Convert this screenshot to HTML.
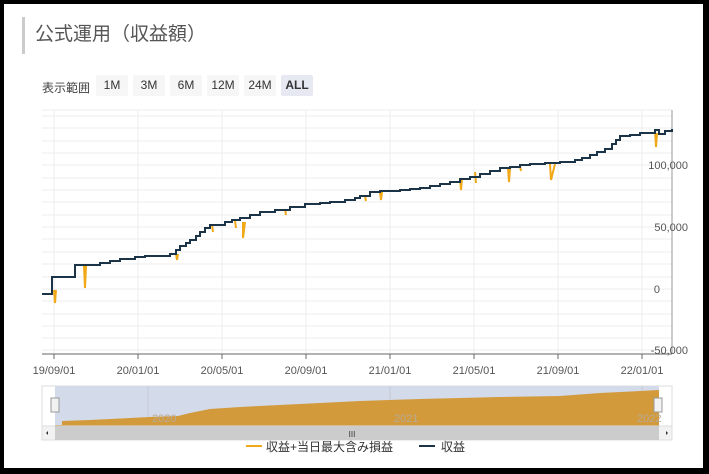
<!DOCTYPE html>
<html><head><meta charset="utf-8"><style>
body{margin:0;width:709px;height:474px;background:#000;overflow:hidden;font-family:"Liberation Sans","Noto Sans CJK JP",sans-serif}
.f{position:absolute;left:4px;top:4px;width:699px;height:464px;background:#fff}
.t{position:absolute;left:22px;top:17px;border-left:3px solid #ccc;padding-left:10px;height:37px;line-height:36px;font-size:19px;color:#555}
.r{position:absolute;top:75px;font-size:12px;color:#444}
.b{position:absolute;top:75px;height:21px;line-height:21px;background:#f6f6f6;font-size:12px;color:#333;text-align:center;border-radius:2px}
</style></head><body><div class="f"></div>
<div class="t">公式運用（収益額）</div>
<div class="r" style="left:42px;top:79px">表示範囲</div>
<div class="b" style="left:96px;width:32px">1M</div>
<div class="b" style="left:133px;width:32px">3M</div>
<div class="b" style="left:170px;width:32px">6M</div>
<div class="b" style="left:207px;width:32px">12M</div>
<div class="b" style="left:244px;width:32px">24M</div>
<div class="b" style="left:281px;width:32px;background:#e6e9f2;font-weight:bold">ALL</div>
<svg width="709" height="474" style="position:absolute;left:0;top:0" font-family="Liberation Sans" font-size="11" fill="#555">
<g stroke="#ececec">
<line x1="42" y1="110" x2="672" y2="110"/>
<path d="M42 116H672M42 128H672M42 141H672M42 153H672M42 165H672M42 178H672M42 190H672M42 202H672M42 215H672M42 227H672M42 239H672M42 252H672M42 264H672M42 277H672M42 289H672M42 301H672M42 314H672M42 326H672M42 338H672M42 350H672"/>
<path d="M54 110V354M138 110V354M222 110V354M306 110V354M390 110V354M474 110V354M558 110V354M642 110V354"/>
</g>
<line x1="672" y1="110" x2="672" y2="354" stroke="#999"/>
<line x1="42" y1="354" x2="672" y2="354" stroke="#666"/>
<path d="M54 354v5M138 354v5M222 354v5M306 354v5M390 354v5M474 354v5M558 354v5M642 354v5" stroke="#666"/>
<g text-anchor="end"><text x="688" y="169">100,000</text><text x="688" y="231">50,000</text><text x="660" y="293">0</text><text x="688" y="354">-50,000</text></g>
<g text-anchor="middle"><text x="54" y="374">19/09/01</text><text x="138" y="374">20/01/01</text><text x="222" y="374">20/05/01</text><text x="306" y="374">20/09/01</text><text x="390" y="374">21/01/01</text><text x="474" y="374">21/05/01</text><text x="558" y="374">21/09/01</text><text x="642" y="374">22/01/01</text></g>
<path d="M54 290L55 303L56 290M84 266L85 288L86 266M176 254L177 260L178 254M243 222L243 238L245 222M212 224L213 232M235 221L236 228M285 209L286 215M365 196L366 201M380 192L381 200L382 192M460 178L461 190L462 178M475 172L476 183M508 168L509 182L510 168M520 166L521 171M550 164L551 180L555 164M655 130L656 147L657 133" stroke="#f0a818" stroke-width="2" fill="none"/>
<path d="M42 294H52V277H75V265H100V263H110V261H120V259H135V257H145V256H170V254H176V250H180V246H186V243H190V240H196V236H200V232H205V228H210V225H225V222H232V220H240V218H250V215H260V212H275V210H290V207H305V204H320V203H330V202H345V200H355V198H360V196H370V192H380V191H400V190H410V189H420V188H430V186H440V184H450V182H460V179H470V177H480V174H490V171H500V168H510V167H520V165H530V164H545V163H560V162H575V160H582V158H590V155H597V152H605V149H612V144H616V140H620V136H630V135H640V133H655V130H659V134H665V131H672V129" stroke="#1b3448" stroke-width="2" fill="none"/>
<rect x="42" y="386" width="630" height="40" fill="#fff" stroke="#ddd"/>
<rect x="55" y="386" width="604" height="40" fill="#d3dae9"/>
<path d="M148 386V426M390 386V426M642 386V426" stroke="#c5cbd8"/>
<path d="M55 426L55 425L62 425L62 421L90 420L150 417L178 416L190 413L210 409L240 407L300 404L360 401L420 399L500 397L560 396L600 393L640 391L659 390L659 426Z" fill="#d29a3a"/>
<g fill="#b8aa96" font-size="11"><text x="152" y="422">2020</text><text x="394" y="422">2021</text><text x="637" y="422">2022</text></g>
<rect x="51" y="398" width="8" height="14" fill="#f2f2f2" stroke="#999"/>
<rect x="654" y="398" width="8" height="14" fill="#f2f2f2" stroke="#999"/>
<rect x="42" y="426" width="630" height="14" fill="#f2f2f2" stroke="#ddd"/>
<rect x="55" y="426" width="604" height="14" fill="#ccc"/>
<text x="352" y="437" font-size="8" fill="#333" text-anchor="middle">III</text>
<path d="M48 431v4l-2-2zM666 431v4l2-2z" fill="#333"/>
<line x1="246" y1="446" x2="262" y2="446" stroke="#f0a818" stroke-width="2"/>
<text x="266" y="451" font-size="12" fill="#333" font-family="Liberation Sans,Noto Sans CJK JP">収益+当日最大含み損益</text>
<line x1="419" y1="446" x2="435" y2="446" stroke="#1b3448" stroke-width="2"/>
<text x="441" y="451" font-size="12" fill="#333" font-family="Liberation Sans,Noto Sans CJK JP">収益</text>
</svg>
</body></html>
